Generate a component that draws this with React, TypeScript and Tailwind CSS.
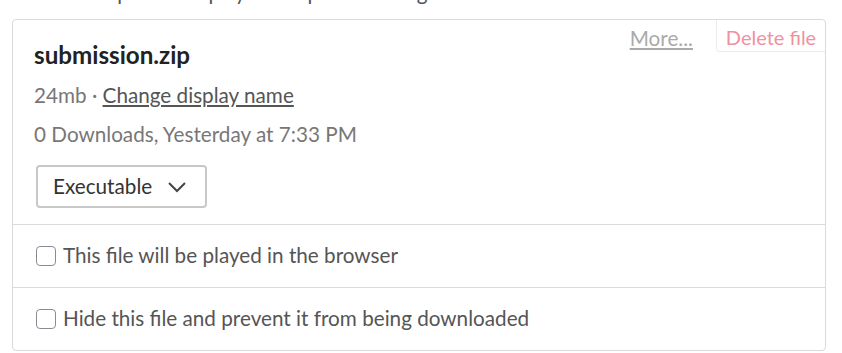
import React, { useState } from 'react';

const FileCard = () => {
  const [playInBrowser, setPlayInBrowser] = useState(false);
  const [hidden, setHidden] = useState(false);

  return (
    <div className="ml-[12px] mr-[16px] mt-[15px] rounded-[4px] border border-[#dadada] bg-white">
      <div className="relative pl-[21px] pr-4 pt-[20px] pb-[16px]">
        {/* top right actions */}
        <div className="absolute right-0 top-0 flex items-start">
          <a href="#" className="mr-[23px] pt-[4px] text-[20.7px] leading-[28px] text-[#aaaaaa] underline">
            More...
          </a>
          <button className="h-[32px] w-[109px] rounded-bl-[4px] border-b border-l border-[#ececec] pt-[2px] text-[20px] leading-[28px] text-[#f0919f]">
            Delete file
          </button>
        </div>

        <h2 className="text-[24.2px] font-bold leading-[29px] text-[#222222]">submission.zip</h2>
        <div className="mt-[12px] text-[20.7px] leading-[28px] text-[#777777]">
          24mb ·{' '}
          <a href="#" className="text-[#555555] underline">
            Change display name
          </a>
        </div>
        <div className="mt-[11px] text-[20.7px] leading-[28px] text-[#777777]">
          0 Downloads, Yesterday at 7:33 PM
        </div>
        <button className="mt-[17px] ml-[2px] flex h-[43px] w-[171px] items-center rounded-[4px] border-2 border-[#c8c8c8] pl-[15px] text-[20.7px] text-[#333333]">
          Executable
          <svg className="ml-[14px] h-[22px] w-[22px]" viewBox="0 0 22 22" fill="none" stroke="#444" strokeWidth="2">
            <path d="M3 7l8 8 8-8" />
          </svg>
        </button>
      </div>

      <label className="flex h-[63px] cursor-pointer items-center border-t border-[#dadada] pl-[23px]">
        <input
          type="checkbox"
          checked={playInBrowser}
          onChange={(e) => setPlayInBrowser(e.target.checked)}
          className="h-[20px] w-[20px] appearance-none rounded-[4px] border border-[#8b8b96] bg-white"
        />
        <span className="ml-[7px] text-[20.7px] text-[#555555]">This file will be played in the browser</span>
      </label>
      <label className="flex h-[63px] cursor-pointer items-center border-t border-[#dadada] pl-[23px]">
        <input
          type="checkbox"
          checked={hidden}
          onChange={(e) => setHidden(e.target.checked)}
          className="h-[20px] w-[20px] appearance-none rounded-[4px] border border-[#8b8b96] bg-white"
        />
        <span className="ml-[7px] text-[20.7px] text-[#555555]">
          Hide this file and prevent it from being downloaded
        </span>
      </label>
    </div>
  );
};

const App = () => {
  return (
    <div className="h-[353px] w-[842px] overflow-hidden bg-white font-['Lato',sans-serif]">
      <p className="mt-[-20px] h-[24px] pl-[12px] text-[20.7px] leading-[24px] text-[#555555]">
        Set which upload will play in the preview widget
      </p>
      <FileCard />
    </div>
  );
};

export default App;
